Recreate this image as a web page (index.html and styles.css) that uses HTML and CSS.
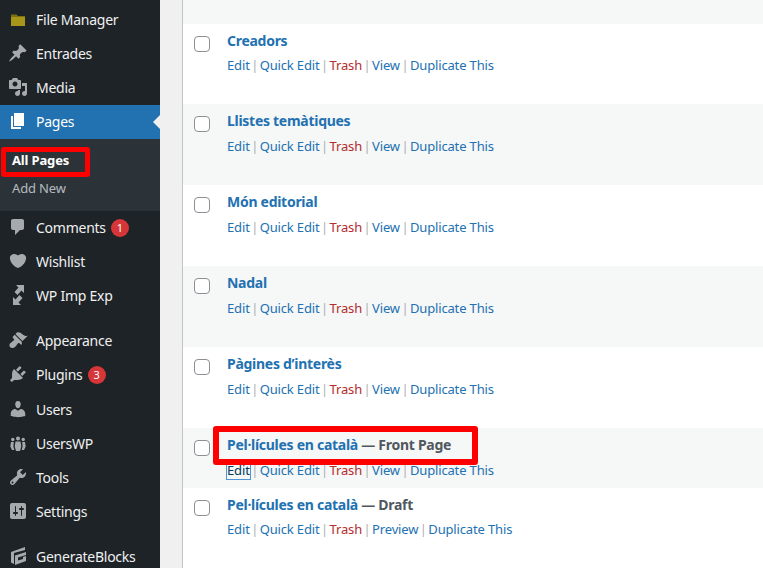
FILE: index.html
```html
<!DOCTYPE html>
<html lang="en">
<head>
    <meta charset="UTF-8">
    <meta name="viewport" content="width=device-width, initial-scale=1.0">
    <title>Pages</title>
    <link rel="stylesheet" href="styles.css">
</head>
<body>
    <div class="page">
        <ul class="menu">
            <li class="menu-item"><svg class="icon" viewBox="0 0 20 20"><path class="folder-tab" d="M3 5.500h5.500l1.500 1.500H17v2H3z"/><path class="folder" d="M3 8h14v9H3z"/></svg>File Manager</li>
            <li class="menu-item"><svg class="icon" viewBox="0 0 20 20"><path d="M10.440 3.020l1.820-1.820 6.360 6.350-1.830 1.820c-1.050-.68-2.480-.57-3.410.36l-.75.75c-.92.93-1.040 2.350-.35 3.410l-1.830 1.820-2.410-2.410-2.800 2.790c-.42.42-3.380 2.710-3.800 2.290s1.860-3.390 2.280-3.810l2.790-2.790L4.100 9.360l1.830-1.820c1.050.69 2.480.57 3.400-.36l.75-.75c.93-.92 1.050-2.350.36-3.410z"/></svg>Entrades</li>
            <li class="menu-item"><svg class="icon" viewBox="0 0 20 20"><path d="M13 11V4c0-.55-.45-1-1-1h-1.670L9 1H5L3.670 3H2c-.55 0-1 .45-1 1v7c0 .55.45 1 1 1h10c.55 0 1-.45 1-1zM7 4.500c1.380 0 2.500 1.120 2.500 2.500S8.380 9.500 7 9.500 4.500 8.380 4.500 7 5.620 4.500 7 4.500zM14 6h5v10.500c0 1.380-1.120 2.500-2.500 2.500S14 17.880 14 16.500s1.120-2.500 2.500-2.500c.17 0 .34.02.5.05V9h-3V6zm-4 8.050V13h2v3.500c0 1.380-1.120 2.500-2.500 2.500S7 17.880 7 16.500 8.120 14 9.500 14c.17 0 .34.02.5.05z"/></svg>Media</li>
            <li class="menu-item current"><svg class="icon" viewBox="0 0 20 20"><path d="M6 15V2h10v13H6zm-1 1h8v2H3V5h2v11z"/></svg>Pages</li>
            <li class="submenu">
                <div class="sub-item sub-current">All Pages</div>
                <div class="sub-item">Add New</div>
            </li>
            <li class="menu-item"><svg class="icon" viewBox="0 0 20 20"><path d="M5 2h9c1.100 0 2 .9 2 2v7c0 1.100-.9 2-2 2h-2l-5 5v-5H5c-1.100 0-2-.9-2-2V4c0-1.100.9-2 2-2z"/></svg>Comments<span class="badge">1</span></li>
            <li class="menu-item"><svg class="icon" viewBox="0 0 20 20"><path d="M10 17.120c3.330-1.400 5.740-3.790 7.040-6.210 1.280-2.410 1.460-4.810.32-6.250-1.030-1.290-2.370-1.780-3.730-1.740s-2.680.63-3.630 1.460c-.95-.83-2.270-1.420-3.630-1.460s-2.700.45-3.730 1.740c-1.140 1.440-.96 3.840.34 6.250 1.280 2.420 3.690 4.810 7.020 6.210z"/></svg>Wishlist</li>
            <li class="menu-item"><svg class="icon" viewBox="0 0 20 20"><path d="M16 0v8l-2.500-2.500-4 4.500-3-3 4-4.500L8 0zM5 20v-8l2.500 2.500 4-4.500 3 3-4 4.500 2.500 2.500z"/></svg>WP Imp Exp</li>
            <li class="menu-item gap"><svg class="icon" viewBox="0 0 20 20"><path d="M14.480 11.060L7.410 3.990l1.500-1.500c.5-.56 2.300-.47 3.510.32 1.210.8 1.430 1.280 2.910 2.100 1.180.64 2.450 1.260 4.450.85zm-.71.71L6.700 4.700 4.930 6.470c-.39.39-.39 1.020 0 1.410l1.060 1.060c.39.39.39 1.030 0 1.420-.6.6-1.430 1.110-2.210 1.690-.35.26-.7.53-1.010.84C1.430 13.230 1 15.500 2 17s3.500 1.500 5.500-.5c.31-.31.58-.66.84-1.010.58-.78 1.090-1.610 1.690-2.210.39-.39 1.030-.39 1.420 0l1.060 1.060c.39.39 1.020.39 1.410 0z"/></svg>Appearance</li>
            <li class="menu-item tall"><svg class="icon" viewBox="0 0 20 20"><path d="M13.110 4.360L9.870 7.600 8 5.730l3.240-3.240c.35-.34 1.050-.2 1.560.32.52.51.66 1.210.31 1.550zm-8 1.770l.91-1.120 9.010 9.010-1.190.84c-.71.71-2.630 1.160-3.820 1.160H6.140L4.900 17.260c-.59.59-1.540.59-2.120 0-.59-.58-.59-1.530 0-2.120l1.240-1.240v-3.880c0-1.130.4-3.190 1.090-3.890zm7.260 3.970l3.240-3.240c.34-.35 1.040-.21 1.550.31.52.51.66 1.210.31 1.550l-3.240 3.250z"/></svg>Plugins<span class="badge">3</span></li>
            <li class="menu-item"><svg class="icon" viewBox="0 0 20 20"><path d="M10 9.250c-2.270 0-2.730-3.440-2.730-3.440C7 4.020 7.820 2 9.970 2c2.160 0 2.980 2.020 2.710 3.810 0 0-.41 3.440-2.680 3.440zm0 2.570L12.720 10c2.390 0 4.520 2.330 4.520 4.530v2.490s-3.650 1.130-7.240 1.130c-3.650 0-7.240-1.130-7.240-1.130v-2.490c0-2.250 1.940-4.480 4.470-4.480z"/></svg>Users</li>
            <li class="menu-item"><svg class="icon" viewBox="0 0 20 20"><circle cx="10" cy="5.500" r="2"/><circle cx="4.800" cy="6.500" r="1.700"/><circle cx="15.200" cy="6.500" r="1.700"/><path d="M7.500 8.500h5l.8 5-1.300 4.500H8l-1.300-4.500zM3 9h2.800l-.4 4.500.9 3.500H4l-1.700-3.500zM17 9h-2.800l.4 4.500-.9 3.500H16l1.700-3.500z"/></svg>UsersWP</li>
            <li class="menu-item"><svg class="icon" viewBox="0 0 20 20"><path d="M16.680 9.770c-1.340 1.340-3.300 1.670-4.950.99l-5.410 6.520c-.99.99-2.590.99-3.580 0s-.99-2.590 0-3.570l6.520-5.420c-.68-1.650-.35-3.610.99-4.950 1.280-1.280 3.120-1.620 4.720-1.060l-2.890 2.890 2.820 2.820 2.860-2.870c.53 1.580.18 3.390-1.080 4.670zM3.810 16.210c.4.39 1.040.39 1.430 0 .4-.4.4-1.040 0-1.430-.39-.4-1.030-.4-1.430 0-.39.39-.39 1.030 0 1.430z"/></svg>Tools</li>
            <li class="menu-item"><svg class="icon" viewBox="0 0 20 20"><path d="M18 16V4c0-1.100-.9-2-2-2H4c-1.100 0-2 .9-2 2v12c0 1.100.9 2 2 2h12c1.100 0 2-.9 2-2zM8 11h1c.55 0 1 .45 1 1s-.45 1-1 1H8v1.500c0 .28-.22.5-.5.5s-.5-.22-.5-.5V13H6c-.55 0-1-.45-1-1s.45-1 1-1h1V5.500c0-.28.22-.5.5-.5s.5.22.5.5V11zm5-2h-1c-.55 0-1-.45-1-1s.45-1 1-1h1V5.500c0-.28.22-.5.5-.5s.5.22.5.5V7h1c.55 0 1 .45 1 1s-.45 1-1 1h-1v5.500c0 .28-.22.5-.5.5s-.5-.22-.5-.5V9z"/></svg>Settings</li>
            <li class="menu-item gap"><svg class="icon" viewBox="0 0 20 20"><path d="M17 1v3L6 7v11l-3-1.500V6zM18 6v3l-8 2.500v3l5-1.500v-2l3-1v5l-11 4V9.500z"/></svg>GenerateBlocks</li>
        </ul>

        <div class="content">
            <div class="list">
                <div class="row-spacer"></div>

                <div class="row">
                    <span class="check"></span>
                    <div>
                        <a class="title">Creadors</a>
                        <div class="actions"><a>Edit</a><span class="sep">|</span><a>Quick Edit</a><span class="sep">|</span><a class="trash">Trash</a><span class="sep">|</span><a>View</a><span class="sep">|</span><a>Duplicate This</a></div>
                    </div>
                </div>
                <div class="row alt">
                    <span class="check"></span>
                    <div>
                        <a class="title">Llistes temàtiques</a>
                        <div class="actions"><a>Edit</a><span class="sep">|</span><a>Quick Edit</a><span class="sep">|</span><a class="trash">Trash</a><span class="sep">|</span><a>View</a><span class="sep">|</span><a>Duplicate This</a></div>
                    </div>
                </div>
                <div class="row">
                    <span class="check"></span>
                    <div>
                        <a class="title">Món editorial</a>
                        <div class="actions"><a>Edit</a><span class="sep">|</span><a>Quick Edit</a><span class="sep">|</span><a class="trash">Trash</a><span class="sep">|</span><a>View</a><span class="sep">|</span><a>Duplicate This</a></div>
                    </div>
                </div>
                <div class="row alt">
                    <span class="check"></span>
                    <div>
                        <a class="title">Nadal</a>
                        <div class="actions"><a>Edit</a><span class="sep">|</span><a>Quick Edit</a><span class="sep">|</span><a class="trash">Trash</a><span class="sep">|</span><a>View</a><span class="sep">|</span><a>Duplicate This</a></div>
                    </div>
                </div>
                <div class="row">
                    <span class="check"></span>
                    <div>
                        <a class="title">Pàgines d’interès</a>
                        <div class="actions"><a>Edit</a><span class="sep">|</span><a>Quick Edit</a><span class="sep">|</span><a class="trash">Trash</a><span class="sep">|</span><a>View</a><span class="sep">|</span><a>Duplicate This</a></div>
                    </div>
                </div>
                <div class="row alt short">
                    <span class="check"></span>
                    <div>
                        <a class="title">Pel·lícules en català</a><span class="state"> — Front Page</span>
                        <div class="actions"><a class="focused">Edit</a><span class="sep">|</span><a>Quick Edit</a><span class="sep">|</span><a class="trash">Trash</a><span class="sep">|</span><a>View</a><span class="sep">|</span><a>Duplicate This</a></div>
                    </div>
                </div>
                <div class="row short">
                    <span class="check"></span>
                    <div>
                        <a class="title">Pel·lícules en català</a><span class="state"> — Draft</span>
                        <div class="actions"><a>Edit</a><span class="sep">|</span><a>Quick Edit</a><span class="sep">|</span><a class="trash">Trash</a><span class="sep">|</span><a>Preview</a><span class="sep">|</span><a>Duplicate This</a></div>
                    </div>
                </div>
            </div>
        </div>

        <!-- red annotation boxes drawn over the screenshot -->
        <div class="mark mark-menu"></div>
        <div class="mark mark-title"></div>
    </div>
</body>
</html>
```

FILE: styles.css
```css
* {
    box-sizing: border-box;
}
html, body {
    margin: 0;
    height: 100%;
    overflow: hidden;
}
body {
    font-family: "Noto Sans", Arial, sans-serif;
    font-size: 13px;
    background-color: #f0f0f1;
}
.page {
    position: relative;
    display: flex;
    height: 568px;
    overflow: hidden;
}

/* admin menu */
.menu {
    flex: 0 0 160px;
    width: 160px;
    margin: 0;
    padding: 3px 0 0;
    list-style: none;
    background-color: #1d2327;
    color: #f0f0f1;
}
.menu-item {
    position: relative;
    display: flex;
    align-items: center;
    height: 34px;
    padding-bottom: 2px;
    font-size: 14px;
    letter-spacing: -0.25px;
    white-space: nowrap;
}
.menu-item.gap {
    margin-top: 11px;
}
.menu-item.tall {
    height: 35px;
    padding-bottom: 3px;
}
.menu-item.current {
    background-color: #2271b1;
    color: #fff;
}
.menu-item.current::after {
    content: "";
    position: absolute;
    right: 0;
    top: 10px;
    border: 7px solid transparent;
    border-right-color: #f0f0f1;
    border-left-width: 0;
}
.icon {
    flex: none;
    width: 20px;
    height: 20px;
    margin: 0 8px;
    fill: #a7aaad;
}
.current .icon {
    fill: #fff;
}
.icon .folder {
    fill: #a8961a;
}
.icon .folder-tab {
    fill: #7d7012;
}
.badge {
    display: inline-block;
    width: 18px;
    height: 18px;
    margin: 2px 0 0 5px;
    border-radius: 50%;
    background-color: #d63638;
    color: #fff;
    font-size: 11px;
    letter-spacing: 0;
    line-height: 18px;
    text-align: center;
}
.submenu {
    height: 72px;
    padding: 8px 0 7px;
    background-color: #2c3338;
}
.sub-item {
    height: 28px;
    padding: 4px 12px;
    color: rgba(240, 246, 252, 0.7);
    font-size: 13px;
    letter-spacing: -0.15px;
}
.sub-current {
    color: #fff;
    font-weight: 700;
}

/* page list */
.content {
    flex: 1;
    min-width: 0;
    padding-left: 22px;
}
.list {
    height: 100%;
    border-left: 1px solid #c3c4c7;
    background-color: #fff;
}
.row-spacer {
    height: 23.55px;
    background-color: #f6f7f7;
}
.row {
    display: flex;
    height: 80.9px;
    padding: 7px 0 0 11px;
    background-color: #fff;
}
.row.alt {
    background-color: #f6f7f7;
}
.row.short {
    height: 59.5px;
}
.check {
    flex: none;
    width: 16px;
    height: 16px;
    margin: 5px 17px 0 0;
    border: 1px solid #8c8f94;
    border-radius: 4px;
    background-color: #fff;
}
.title {
    color: #2271b1;
    font-size: 14px;
    font-weight: 700;
    letter-spacing: -0.28px;
}
.state {
    color: #50575e;
    font-size: 14px;
    font-weight: 700;
    letter-spacing: -0.28px;
}
.actions {
    margin-top: 6.9px;
    letter-spacing: -0.15px;
    white-space: nowrap;
}
.actions a {
    color: #2271b1;
}
.actions .trash {
    color: #b32d2e;
}
.actions .focused {
    color: #043959;
    box-shadow: 0 0 0 1px #4f94d4;
}
.sep {
    display: inline-block;
    width: 10px;
    color: #a7aaad;
    font-size: 12px;
    text-align: center;
}

/* annotation boxes */
.mark {
    position: absolute;
    border: 5px solid #f00;
    border-radius: 3px;
}
.mark-menu {
    left: 1px;
    top: 147px;
    width: 89px;
    height: 30px;
}
.mark-title {
    left: 213px;
    top: 426px;
    width: 265px;
    height: 39px;
    border-width: 6px;
}
```
